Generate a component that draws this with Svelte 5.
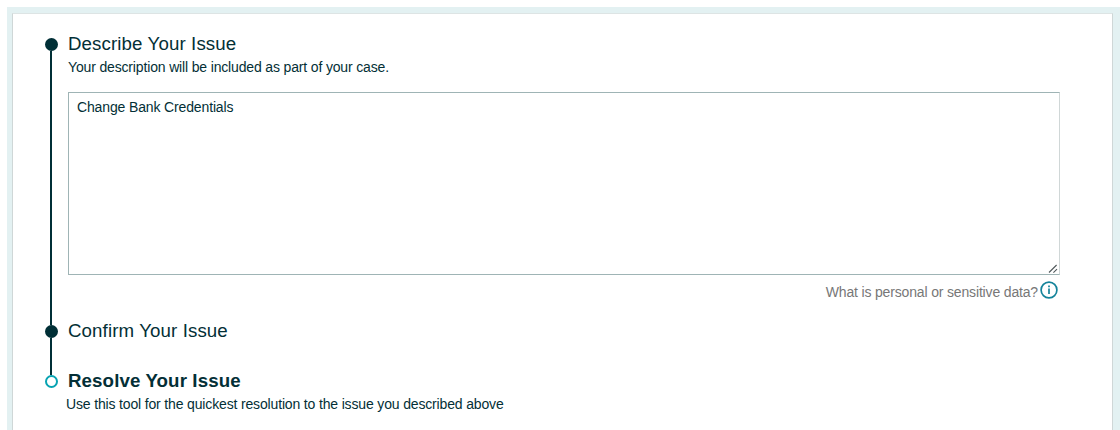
<script>
  let description = $state('Change Bank Credentials');
</script>

<div class="page">
  <main class="card">
    <section class="step describe">
      <div class="rail"><span class="dot"></span></div>
      <div class="content">
        <h2>Describe Your Issue</h2>
        <p class="hint">Your description will be included as part of your case.</p>
        <div class="field">
          <textarea bind:value={description} spellcheck="false" aria-label="Issue description"></textarea>
          <svg class="grip" viewBox="0 0 10 10" aria-hidden="true">
            <path d="M1 8.5 8.6 1M5.4 8.7 9 5.2" />
          </svg>
        </div>
        <div class="privacy">
          <span>What is personal or sensitive data?</span>
          <svg viewBox="0 0 18 18" aria-hidden="true">
            <circle cx="9" cy="9" r="7.9" />
            <path d="M9 7.6V13M9 4.5V6.3" />
          </svg>
        </div>
      </div>
    </section>
    <section class="step confirm">
      <div class="rail"><span class="dot"></span></div>
      <div class="content"><h2>Confirm Your Issue</h2></div>
    </section>
    <section class="step resolve">
      <div class="rail"><span class="dot open"></span></div>
      <div class="content">
        <h2>Resolve Your Issue</h2>
        <p class="hint">Use this tool for the quickest resolution to the issue you described above</p>
      </div>
    </section>
  </main>
</div>

<style>
  :global(body) { background: #fff; overflow: hidden; }
  .page {
    box-sizing: border-box;
    height: 423px;
    margin: 7px 0 0 7px;
    padding: 6px 7px 0 5px;
    background: #e3f1f2;
    font-family: "Liberation Sans", Arial, sans-serif;
    color: #032f36;
    overflow: hidden;
  }
  .card {
    box-sizing: border-box;
    height: 417px;
    padding: 24px 52px 0 32px;
    background: #fff;
    border: 1px solid #cfd7d7;
    border-top-color: #dde4e4;
    border-bottom: 0;
  }
  .step { display: flex; }
  .describe { height: 287px; }
  .confirm { height: 50px; }
  .rail {
    flex: none;
    display: flex;
    flex-direction: column;
    align-items: center;
    width: 13px;
    margin-right: 10px;
  }
  .dot {
    box-sizing: border-box;
    flex: none;
    width: 13px;
    height: 13px;
    border-radius: 50%;
    background: #002f36;
  }
  .open { background: #fff; border: 2px solid #07a3b2; }
  .describe .rail::after, .confirm .rail::after {
    content: "";
    width: 2px;
    margin-right: 1px;
    flex: 1;
    background: #002f36;
  }
  .content { flex: 1; min-width: 0; }
  h2 {
    margin: -5px 0 0;
    font-size: 18.7px;
    line-height: 22px;
    font-weight: 400;
    letter-spacing: 0.11px;
    white-space: nowrap;
  }
  .resolve h2 { font-weight: 700; }
  .hint {
    margin: 4px 0 0;
    font-size: 14px;
    letter-spacing: -0.155px;
    line-height: 17px;
    white-space: nowrap;
  }
  .resolve .hint { margin-left: -2px; }
  .field { display: grid; margin-top: 16px; }
  textarea, .grip { grid-area: 1 / 1; }
  textarea {
    box-sizing: border-box;
    width: 992px;
    height: 183px;
    padding: 6px 8px;
    border: 1px solid #9fb4b5;
    border-right-color: #d0d7d7;
    resize: none;
    outline: 0;
    background: #fff;
    color: inherit;
    font: 14px/17px "Liberation Sans", Arial, sans-serif;
    letter-spacing: -0.14px;
  }
  .grip {
    place-self: end;
    width: 10px;
    height: 10px;
    margin: 0 2px 1px 0;
    fill: none;
    stroke: #50585b;
    stroke-width: 1.1;
  }
  .privacy {
    display: flex;
    justify-content: flex-end;
    align-items: center;
    gap: 2px;
    height: 18px;
    margin: 6px 2px 0 0;
    color: #777;
    font-size: 14px;
    letter-spacing: -0.16px;
    white-space: nowrap;
  }
  .privacy span { padding-top: 3px; }
  .privacy svg {
    width: 18px;
    height: 18px;
    fill: none;
    stroke: #14839a;
    stroke-width: 1.7;
  }
</style>
